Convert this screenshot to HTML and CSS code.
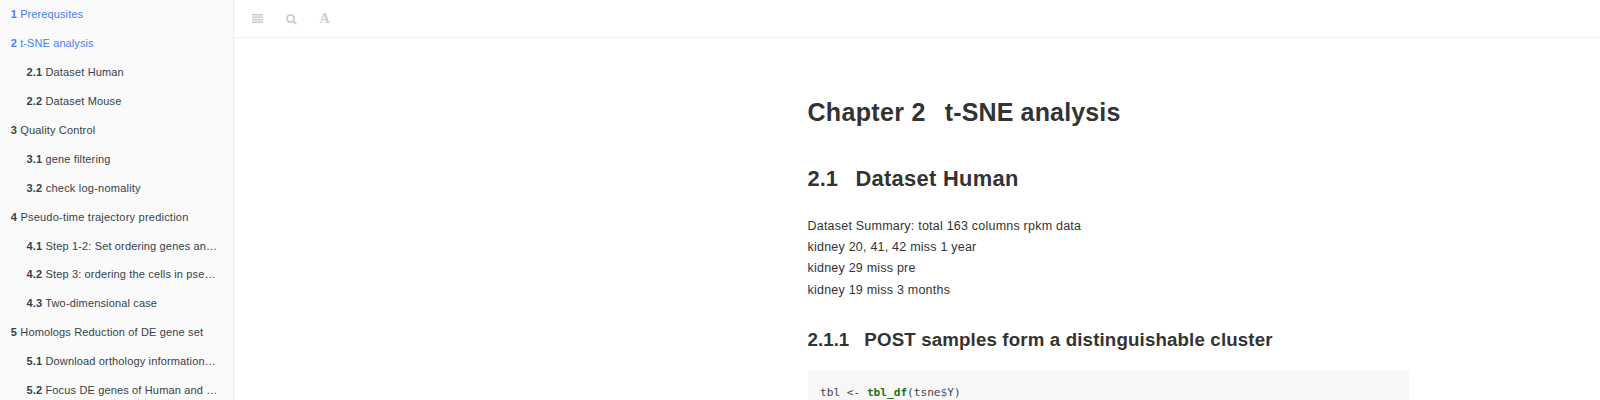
FILE: index.html
```html
<!DOCTYPE html>
<html lang="en">
<head>
<meta charset="utf-8">
<title>Chapter 2 t-SNE analysis</title>
<link rel="stylesheet" href="styles.css">
</head>
<body>
<div class="book">
  <nav class="summary">
    <a class="item done"><b>1</b> <span>Prerequsites</span></a>
    <a class="item done"><b>2</b> <span>t-SNE analysis</span></a>
    <a class="item sub"><b>2.1</b> <span>Dataset Human</span></a>
    <a class="item sub"><b>2.2</b> <span>Dataset Mouse</span></a>
    <a class="item"><b>3</b> <span>Quality Control</span></a>
    <a class="item sub"><b>3.1</b> <span>gene filtering</span></a>
    <a class="item sub loose"><b>3.2</b> <span>check log-nomality</span></a>
    <a class="item loose"><b>4</b> <span>Pseudo-time trajectory prediction</span></a>
    <a class="item sub"><b>4.1</b> <span>Step 1-2: Set ordering genes an…</span></a>
    <a class="item sub"><b>4.2</b> <span>Step 3: ordering the cells in pse…</span></a>
    <a class="item sub"><b>4.3</b> <span>Two-dimensional case</span></a>
    <a class="item"><b>5</b> <span>Homologs Reduction of DE gene set</span></a>
    <a class="item sub"><b>5.1</b> <span>Download orthology information…</span></a>
    <a class="item sub"><b>5.2</b> <span>Focus DE genes of Human and …</span></a>
  </nav>
  <div class="body">
    <header class="toolbar">
      <svg class="icon menu" viewBox="0 0 11 9"><path d="M0 0h11v1.6H0zM0 2.5h11v1.6H0zM0 5h11v1.6H0zM0 7.4h11v1.6H0z"/></svg>
      <svg class="icon search" viewBox="0 0 11 11"><circle cx="4.5" cy="4.5" r="3.6"/><path d="M7.2 7.2l3 3"/></svg>
      <span class="font-icon">A</span>
    </header>
    <main class="page">
      <h1><span class="num">Chapter 2</span>t-SNE analysis</h1>
      <h2><span class="num">2.1</span>Dataset Human</h2>
      <p>Dataset Summary: total 163 columns rpkm data<br>kidney 20, 41, 42 miss 1 year<br>kidney 29 miss pre<br>kidney 19 miss 3 months</p>
      <h3><span class="num">2.1.1</span>POST samples form a distinguishable cluster</h3>
      <pre>tbl &lt;- <b>tbl_df</b>(tsne<i>$</i>Y)</pre>
    </main>
  </div>
</div>
</body>
</html>
```
FILE: styles.css
```css
* { box-sizing: border-box; }
body { margin: 0; background: #fff; color: #333; font-family: "Liberation Sans", Arial, sans-serif; }
.book { display: flex; height: 400px; overflow: hidden; }
.summary { width: 234px; flex: none; background: #fafafa; border-right: 1px solid #ededed; overflow: hidden; }
.item { display: block; height: 28.95px; line-height: 29px; padding-left: 10.8px; font-size: 11px; letter-spacing: 0.15px; color: #364149; white-space: nowrap; }
.sub { padding-left: 26.5px; }
.loose { letter-spacing: 0.22px; }
.done { color: #4183f4; letter-spacing: 0.1px; }
.body { flex: 1; min-width: 0; display: flex; flex-direction: column; }
.toolbar { display: flex; flex: none; height: 38px; border-bottom: 1px solid #efefef; color: #ccc; padding-left: 17.5px; }
.icon { flex: none; display: block; fill: #ccc; }
.menu { width: 11px; height: 9px; margin-top: 14px; }
.search { width: 11px; height: 11px; margin: 14px 0 0 23px; }
.search circle, .search path { fill: none; stroke: #ccc; stroke-width: 1.7; }
.font-icon { margin: 12px 0 0 23px; font: bold 14px/14px "Liberation Serif", serif; }
.page { display: flex; flex: 1; flex-direction: column; width: 601.5px; margin: 0 0 0 573.5px; }
.num { display: inline-block; }
h1, h2, h3, p, pre { margin: 0; white-space: nowrap; }
h1 { padding-top: 58px; font-size: 25px; line-height: 32px; letter-spacing: 0.15px; }
h1 .num { margin-right: 19px; letter-spacing: 0.32px; }
h2 { padding-top: 37px; font-size: 21.9px; line-height: 28px; letter-spacing: 0.3px; }
h2 .num { margin-right: 17.5px; letter-spacing: 0; }
p { padding-top: 23px; font-size: 12.5px; line-height: 21.2px; letter-spacing: 0.22px; }
h3 { padding-top: 27.4px; font-size: 18.7px; line-height: 24px; letter-spacing: 0.15px; }
h3 .num { margin-right: 15px; letter-spacing: 0.05px; }
pre { flex: 1; margin-top: 18.4px; padding: 13.4px 12.5px 0; background: #f7f7f7; font: 11.13px/18px "DejaVu Sans Mono", monospace; color: #444; overflow: hidden; }
pre b { color: #267326; }
pre i { font-style: normal; color: #666; }
```
